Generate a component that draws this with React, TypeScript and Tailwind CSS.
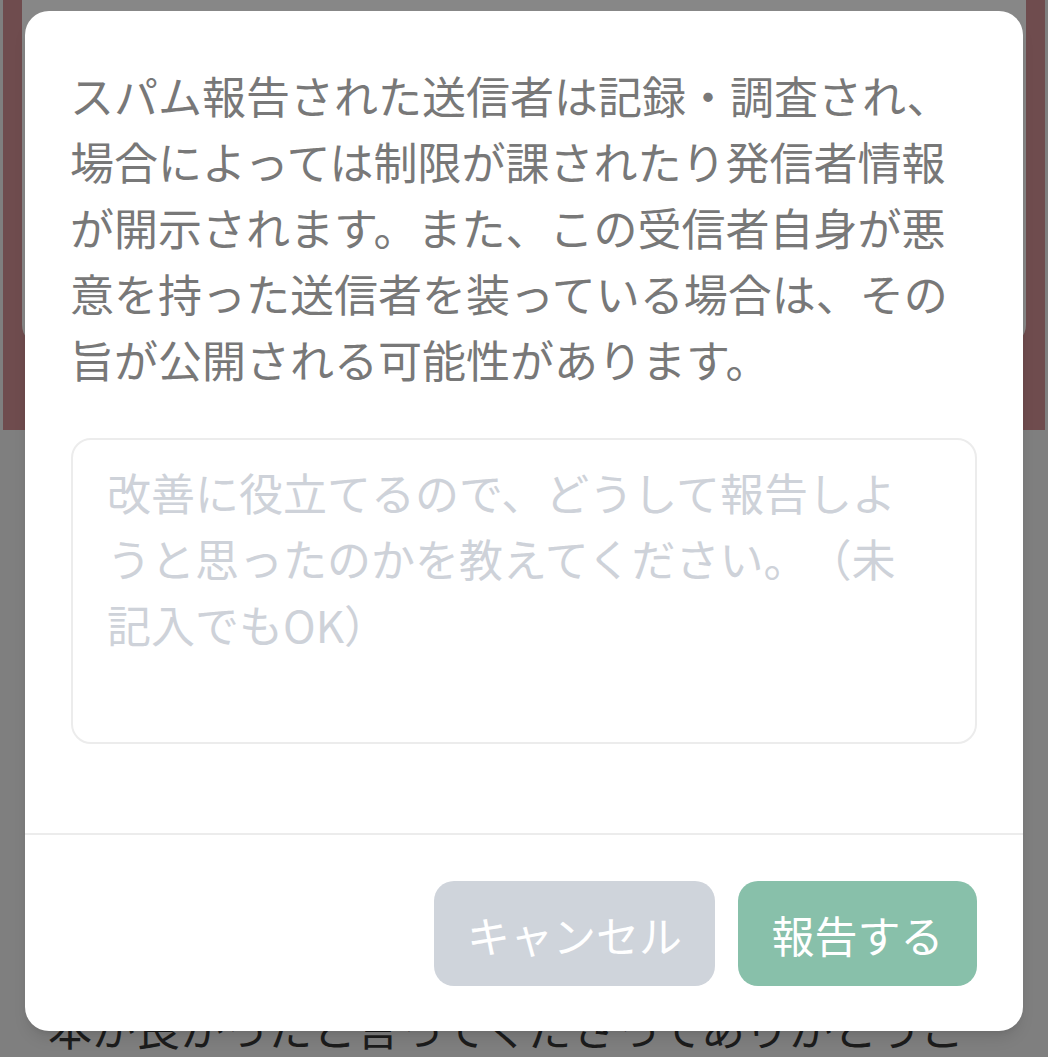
import React from 'react';

const jp = { fontFamily: '"Noto Sans CJK JP", "Noto Sans", sans-serif' };

function ReportDialog() {
  return (
    <div className="absolute left-[25px] top-[11px] w-[998px] h-[1020px] bg-white rounded-[24px] shadow-lg flex flex-col overflow-hidden">
      <div className="px-[45px] pt-[51px]">
        <p className="text-[44px] leading-[66px] text-[#787878] [text-spacing-trim:space-all]">
          スパム報告された送信者は記録・調査され、<br />
          場合によっては制限が課されたり発信者情報<br />
          が開示されます。また、この受信者自身が悪<br />
          意を持った送信者を装っている場合は、その<br />
          旨が公開される可能性があります。
        </p>
        <textarea
          style={jp}
          placeholder="改善に役立てるので、どうして報告しようと思ったのかを教えてください。（未記入でもOK）"
          className="mt-[46px] ml-[1px] block w-[906px] h-[306px] resize-none rounded-[20px] border-2 border-[#ececec] pl-[34px] pr-[58px] py-[19px] text-[44px] leading-[66px] text-[#555] placeholder:text-[#ced2d9] outline-none [text-spacing-trim:space-all]"
        />
      </div>

      <div className="mt-[89px] h-[2px] bg-[#ececec]" />

      <div className="flex justify-end gap-[23px] px-[46px] pt-[46px]">
        <button className="w-[281px] h-[105px] rounded-[20px] bg-[#cfd4db] text-white text-[43px] leading-[66px]">
          キャンセル
        </button>
        <button className="w-[239px] h-[105px] rounded-[20px] bg-[#88c0aa] text-white text-[43px] leading-[66px]">
          報告する
        </button>
      </div>
    </div>
  );
}

export default function App() {
  return (
    <div style={jp} className="relative w-[1048px] h-[1057px] overflow-hidden bg-[#7f7f7f]">
      {/* page behind the overlay */}
      <div className="mx-[3px] h-[430px] bg-[#6f4c4e] px-[19px]">
        <div className="h-[345px] rounded-b-[20px] bg-[#878787]" />
      </div>
      <div className="mt-[567px] pl-[48px] text-[44px] leading-[60px] text-[#1c1c1c] whitespace-nowrap">
        本が良かったと言ってくださってありがとうご
      </div>

      <ReportDialog />
    </div>
  );
}
